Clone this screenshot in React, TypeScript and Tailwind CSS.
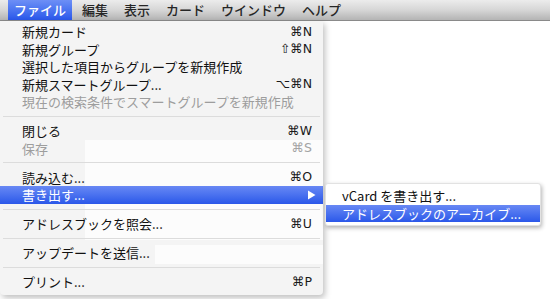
type MenuRow =
  | { kind: "item"; label: string; shortcut?: string; disabled?: boolean; active?: boolean; submenu?: boolean }
  | { kind: "sep" };

const menuBar = ["ファイル", "編集", "表示", "カード", "ウインドウ", "ヘルプ"];

const fileMenu: MenuRow[] = [
  { kind: "item", label: "新規カード", shortcut: "⌘N" },
  { kind: "item", label: "新規グループ", shortcut: "⇧⌘N" },
  { kind: "item", label: "選択した項目からグループを新規作成" },
  { kind: "item", label: "新規スマートグループ...", shortcut: "⌥⌘N" },
  { kind: "item", label: "現在の検索条件でスマートグループを新規作成", disabled: true },
  { kind: "sep" },
  { kind: "item", label: "閉じる", shortcut: "⌘W" },
  { kind: "item", label: "保存", shortcut: "⌘S", disabled: true },
  { kind: "sep" },
  { kind: "item", label: "読み込む...", shortcut: "⌘O" },
  { kind: "item", label: "書き出す...", active: true, submenu: true },
  { kind: "sep" },
  { kind: "item", label: "アドレスブックを照会...", shortcut: "⌘U" },
  { kind: "sep" },
  { kind: "item", label: "アップデートを送信..." },
  { kind: "sep" },
  { kind: "item", label: "プリント...", shortcut: "⌘P" },
];

const App = () => {
  return (
    <div className="relative w-[550px] h-[299px] overflow-hidden bg-white font-['Noto_Sans_CJK_JP',sans-serif] text-[13px] text-[#111]">

      {/* MENU BAR */}
      <div className="flex items-stretch h-[21px] pl-2 bg-gradient-to-b from-[#ececec] via-[#d6d6d6] to-[#b4b4b4] border-b border-[#8a8a8a]">
        {menuBar.map((name, i) => (
          <div
            key={name}
            className={
              i === 0
                ? "flex items-center px-[6px] mr-[2px] font-medium text-white bg-gradient-to-b from-[#6d8ff6] to-[#2a56ea]"
                : "flex items-center px-[8px] font-medium text-[#262626]"
            }
          >
            {name}
          </div>
        ))}
      </div>

      {/* FILE MENU */}
      <div className="absolute top-[21px] left-0 w-[323px] h-[274px] bg-[#f4f4f4] pt-[2px] shadow-[2px_3px_6px_rgba(0,0,0,0.25)] rounded-b-[4px]">

        {/* page showing through the menu */}
        <div className="absolute left-[85px] top-[119px] w-[238px] h-[100px] bg-[#fcfcfc]" />
        <div className="absolute left-[155px] top-[224px] w-[168px] h-[19px] bg-[#fcfcfc]" />

        <div className="relative flex flex-col">
          {fileMenu.map((row, i) =>
            row.kind === "sep" ? (
              <div key={i} className="h-[11.5px] flex items-center px-[3px]">
                <div className="h-px w-full bg-[#dcdcdc]" />
              </div>
            ) : (
              <div
                key={i}
                className={
                  row.active
                    ? "h-[17.5px] flex items-center justify-between pl-[22px] pr-[7px] text-white bg-gradient-to-b from-[#6888f4] to-[#2b57e9]"
                    : "h-[17.5px] flex items-center justify-between pl-[22px] pr-[11px]"
                }
              >
                <span className={row.disabled ? "text-[#9d9d9d] leading-none" : "leading-none"}>
                  {row.label}
                </span>
                {row.shortcut && (
                  <span className={`font-['DejaVu_Sans',sans-serif] text-[12.5px] leading-none ${row.disabled ? "text-[#a3a3a3]" : "text-[#1a1a1a]"}`}>
                    {row.shortcut}
                  </span>
                )}
                {row.submenu && (
                  <svg width="9" height="10" viewBox="0 0 9 10">
                    <path d="M1 0.5 L8.5 5 L1 9.5 Z" fill="white" />
                  </svg>
                )}
              </div>
            )
          )}
        </div>
      </div>

      {/* EXPORT SUBMENU */}
      <div className="absolute left-[325px] top-[183px] w-[216px] bg-white py-[3px] border border-[#e2e2e2] rounded-[3px] shadow-[1px_2px_4px_rgba(0,0,0,0.3)]">
        <div className="h-[17.5px] flex items-center pl-[16px] leading-none">
          vCard を書き出す...
        </div>
        <div className="h-[17.5px] flex items-center pl-[16px] leading-none text-white bg-gradient-to-b from-[#6888f4] to-[#2b57e9]">
          アドレスブックのアーカイブ...
        </div>
      </div>

    </div>
  );
};

export default App;
